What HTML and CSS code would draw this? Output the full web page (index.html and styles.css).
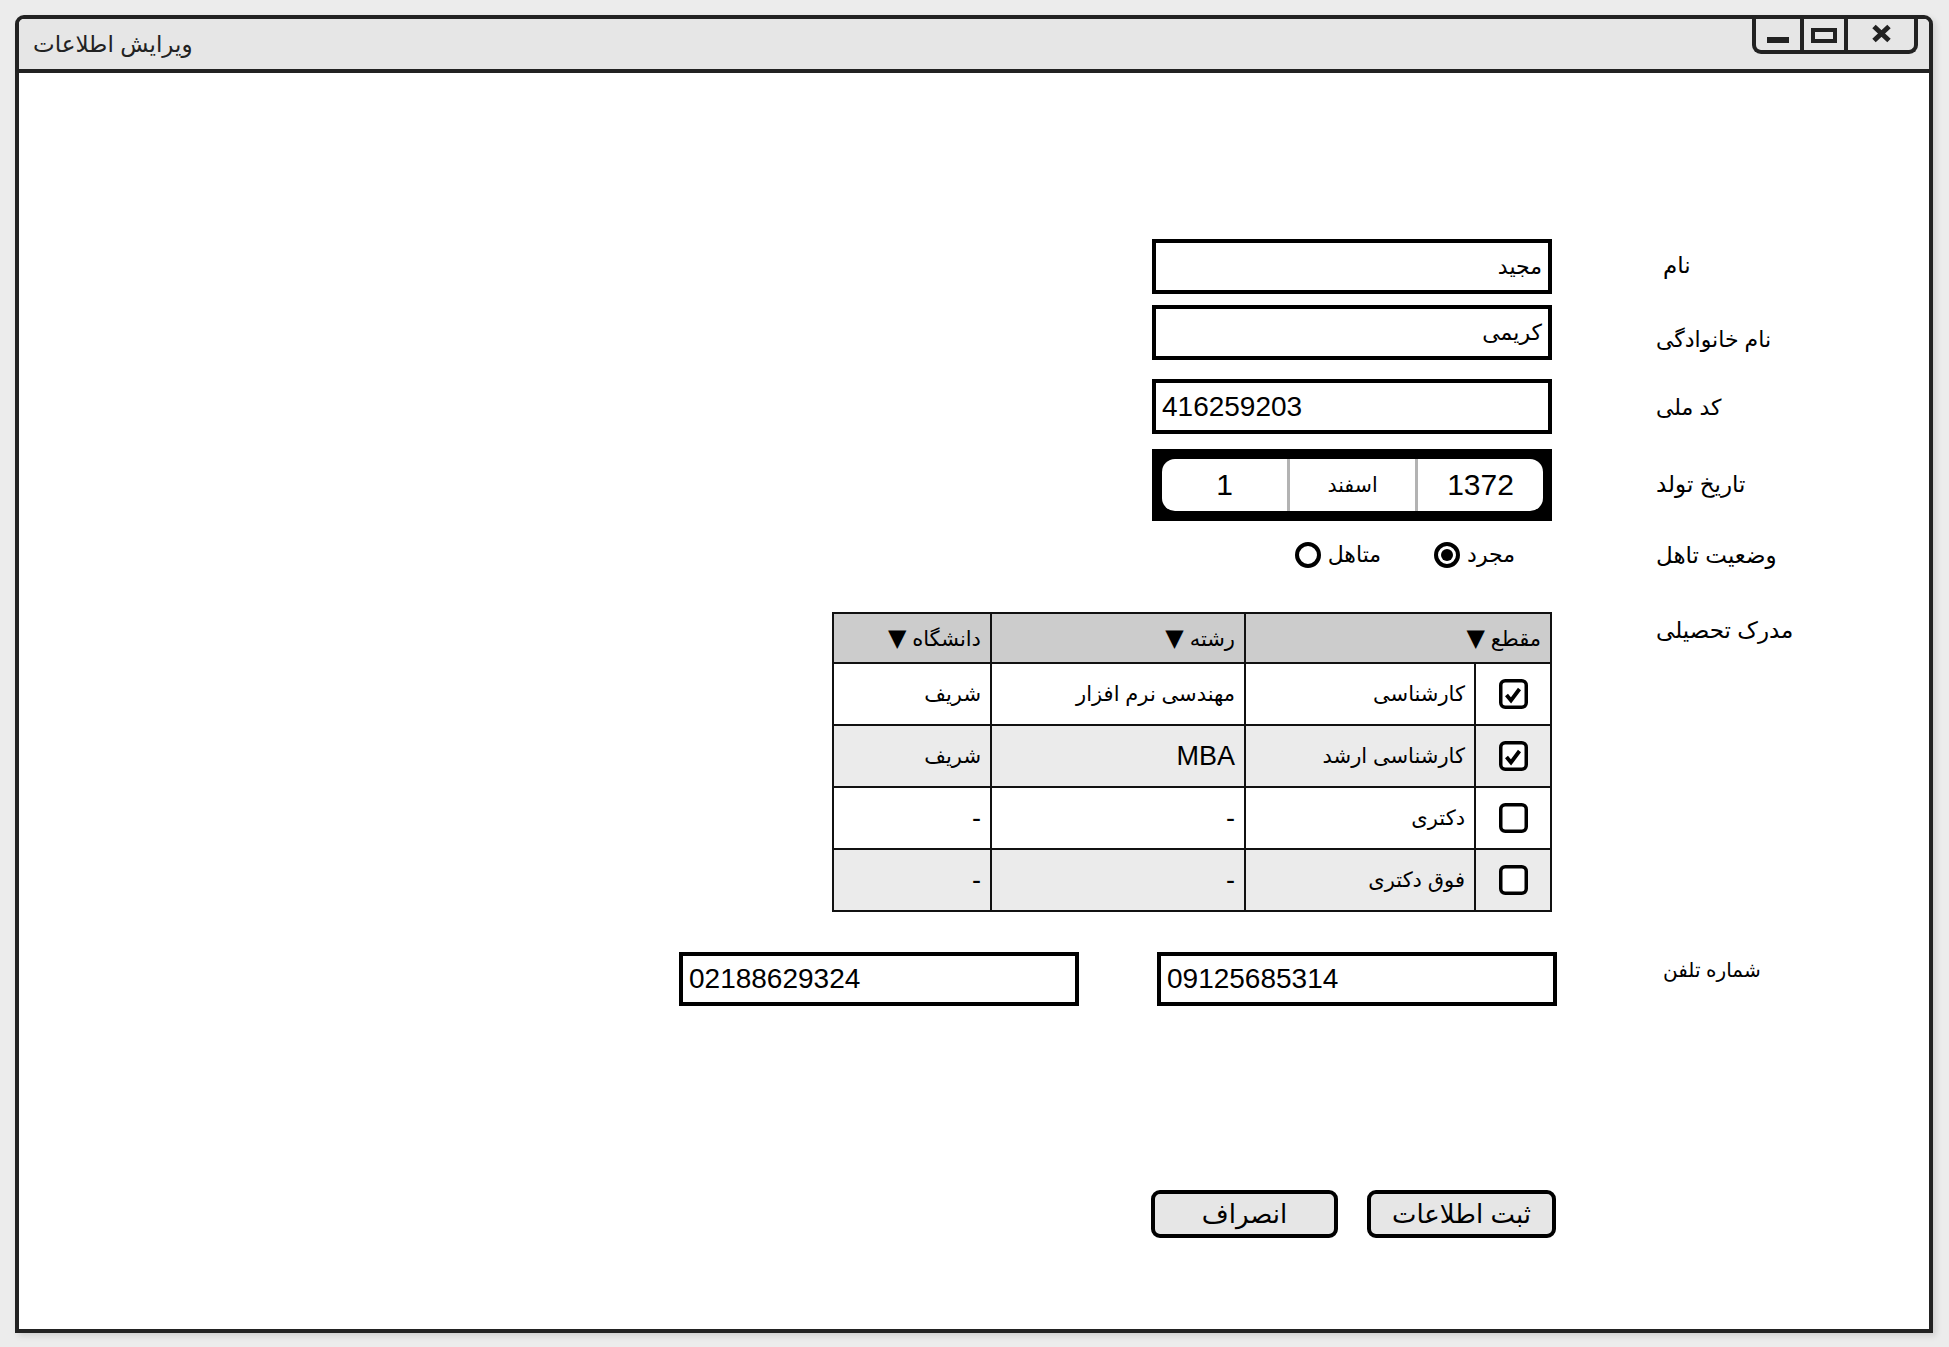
FILE: index.html
```html
<!DOCTYPE html>
<html lang="fa">
<head>
<meta charset="utf-8">
<title>ویرایش اطلاعات</title>
<link rel="stylesheet" href="styles.css">
</head>
<body>
<div class="window">
  <div class="titlebar">
    <span class="title" dir="rtl">ویرایش اطلاعات</span>
    <div class="controls">
      <span class="ctl ctl-min"><span class="min-bar"></span></span>
      <span class="ctl ctl-max"><span class="max-box"></span></span>
      <span class="ctl ctl-close">
        <svg width="21" height="19" viewBox="0 0 21 19"><path d="M3 2.5 L18 16.5 M18 2.5 L3 16.5" stroke="#222" stroke-width="5" fill="none"/></svg>
      </span>
    </div>
  </div>

  <div class="content">
    <div class="row row-name">
      <div class="main"><div class="field rtl" dir="rtl">مجید</div></div>
      <div class="label label-name" dir="rtl">نام</div>
    </div>

    <div class="row row-family">
      <div class="main"><div class="field rtl" dir="rtl">کریمی</div></div>
      <div class="label label-family" dir="rtl">نام خانوادگی</div>
    </div>

    <div class="row row-code">
      <div class="main"><div class="field">416259203</div></div>
      <div class="label label-code" dir="rtl">کد ملی</div>
    </div>

    <div class="row row-date">
      <div class="main">
        <div class="date">
          <div class="date-inner">
            <span class="seg">1</span>
            <span class="seg month" dir="rtl">اسفند</span>
            <span class="seg">1372</span>
          </div>
        </div>
      </div>
      <div class="label label-date" dir="rtl">تاریخ تولد</div>
    </div>

    <div class="row row-marital">
      <div class="main">
        <div class="radios">
          <span class="opt"><span class="radio"></span><span dir="rtl">متاهل</span></span>
          <span class="opt"><span class="radio"><span class="dot"></span></span><span dir="rtl">مجرد</span></span>
        </div>
      </div>
      <div class="label label-marital" dir="rtl">وضعیت تاهل</div>
    </div>

    <div class="row row-edu">
      <div class="main">
        <table class="grid" dir="rtl">
          <colgroup>
            <col class="c-check"><col class="c-level"><col class="c-field"><col class="c-uni">
          </colgroup>
          <thead>
            <tr>
              <th colspan="2">مقطع <span class="arrow">▼</span></th>
              <th>رشته <span class="arrow">▼</span></th>
              <th>دانشگاه <span class="arrow">▼</span></th>
            </tr>
          </thead>
          <tbody>
            <tr>
              <td class="chk"><svg class="box" width="29" height="30" viewBox="0 0 29 30"><rect x="1.75" y="1.75" width="25.5" height="26.5" rx="4.5" fill="#fff" stroke="#000" stroke-width="3.5"/><path d="M7.5 16 L12 21.5 L20.5 10" fill="none" stroke="#000" stroke-width="3.8"/></svg></td>
              <td>کارشناسی</td><td>مهندسی نرم افزار</td><td>شریف</td>
            </tr>
            <tr>
              <td class="chk"><svg class="box" width="29" height="30" viewBox="0 0 29 30"><rect x="1.75" y="1.75" width="25.5" height="26.5" rx="4.5" fill="#fff" stroke="#000" stroke-width="3.5"/><path d="M7.5 16 L12 21.5 L20.5 10" fill="none" stroke="#000" stroke-width="3.8"/></svg></td>
              <td>کارشناسی ارشد</td><td class="lat">MBA</td><td>شریف</td>
            </tr>
            <tr>
              <td class="chk"><svg class="box" width="29" height="30" viewBox="0 0 29 30"><rect x="1.75" y="1.75" width="25.5" height="26.5" rx="4.5" fill="#fff" stroke="#000" stroke-width="3.5"/></svg></td>
              <td>دکتری</td><td class="lat">-</td><td class="lat">-</td>
            </tr>
            <tr>
              <td class="chk"><svg class="box" width="29" height="30" viewBox="0 0 29 30"><rect x="1.75" y="1.75" width="25.5" height="26.5" rx="4.5" fill="#fff" stroke="#000" stroke-width="3.5"/></svg></td>
              <td>فوق دکتری</td><td class="lat">-</td><td class="lat">-</td>
            </tr>
          </tbody>
        </table>
      </div>
      <div class="label label-edu" dir="rtl">مدرک تحصیلی</div>
    </div>

    <div class="row row-phone">
      <div class="main">
        <div class="phones">
          <div class="field phone">02188629324</div>
          <div class="field phone">09125685314</div>
        </div>
      </div>
      <div class="label label-phone" dir="rtl">شماره تلفن</div>
    </div>

    <div class="row row-actions">
      <div class="main">
        <div class="actions">
          <span class="btn" dir="rtl">انصراف</span>
          <span class="btn btn-primary" dir="rtl">ثبت اطلاعات</span>
        </div>
      </div>
      <div></div>
    </div>
  </div>
</div>
</body>
</html>
```

FILE: styles.css
```css
* { box-sizing: border-box; }
html, body { margin: 0; }
body {
  background: #ececec;
  padding: 15px;
  font-family: "Liberation Sans", "DejaVu Sans", sans-serif;
  color: #000;
  width: 1949px;
  height: 1347px;
  overflow: hidden;
}
.window {
  width: 1918px;
  height: 1318px;
  border: 4px solid #222;
  border-radius: 9px 9px 0 0;
  background: #fff;
  box-shadow: 3px 3px 6px rgba(0, 0, 0, 0.12);
  display: flex;
  flex-direction: column;
}
.titlebar {
  height: 54px;
  flex: none;
  background: #e6e6e6;
  border-bottom: 4px solid #222;
  border-radius: 5px 5px 0 0;
  display: flex;
  align-items: flex-start;
  justify-content: space-between;
  padding-left: 14px;
  padding-right: 11px;
}
.title {
  align-self: center;
  font-size: 23px;
  color: #222;
}
.controls {
  display: flex;
  height: 35px;
  border: 4px solid #222;
  border-top: 0;
  border-radius: 0 0 9px 9px;
}
.ctl {
  display: flex;
  justify-content: center;
  align-items: flex-end;
  padding-bottom: 7px;
}
.ctl-min { width: 44px; }
.ctl-max { width: 44px; border-left: 4px solid #222; }
.ctl-close { width: 70px; border-left: 4px solid #222; }
.min-bar { width: 22px; height: 6px; background: #222; }
.max-box { width: 26px; height: 15px; border: 4px solid #222; }

.content {
  flex: 1;
  padding-top: 166px;
}
.row {
  display: grid;
  grid-template-columns: 1fr 273px;
  column-gap: 104px;
  align-items: start;
}
.main {
  display: flex;
  justify-content: flex-end;
}
.label {
  font-size: 23px;
  line-height: 30px;
  text-align: left;
  white-space: nowrap;
}
.row-name { margin-bottom: 11px; }
.row-family { margin-bottom: 19px; }
.row-code { margin-bottom: 15px; }
.row-date { margin-bottom: 16px; }
.row-marital { margin-bottom: 39px; }
.row-edu { margin-bottom: 40px; }
.row-phone { margin-bottom: 184px; }

.label-name { margin-top: 11px; padding-left: 7px; }
.label-family { margin-top: 20px; font-size: 22px; }
.label-code { margin-top: 14px; font-size: 22px; }
.label-date { margin-top: 20px; }
.label-marital { margin-top: 3px; }
.label-edu { margin-top: 3px; }
.label-phone { margin-top: 3px; padding-left: 7px; font-size: 20px; }

.field {
  width: 400px;
  height: 55px;
  border: 4px solid #000;
  display: flex;
  align-items: center;
  padding: 0 6px;
  font-size: 28px;
  background: #fff;
}
.field.rtl {
  font-size: 22px;
}

.date {
  width: 400px;
  height: 72px;
  background: #000;
  padding: 10px 9px 10px 10px;
}
.date-inner {
  display: flex;
  height: 100%;
  background: #fff;
  border-radius: 13px;
}
.seg {
  flex: 1;
  display: flex;
  align-items: center;
  justify-content: center;
  font-size: 30px;
}
.seg + .seg { border-left: 3px solid #b3b3b3; }
.seg.month { font-size: 20.5px; }

.radios {
  display: flex;
  align-items: center;
  gap: 53px;
  margin-right: 37px;
  height: 36px;
  font-size: 22px;
}
.opt {
  display: flex;
  align-items: center;
  gap: 7px;
}
.radio {
  width: 26px;
  height: 26px;
  border: 4px solid #000;
  border-radius: 50%;
  display: flex;
  align-items: center;
  justify-content: center;
}
.dot {
  width: 12px;
  height: 12px;
  border-radius: 50%;
  background: #000;
}

.grid {
  border-collapse: collapse;
  table-layout: fixed;
  width: 718px;
  font-size: 21px;
}
.c-check { width: 76px; }
.c-level { width: 230px; }
.c-field { width: 254px; }
.c-uni { width: 158px; }
.grid th, .grid td {
  border: 2px solid #111;
  padding: 0 9px;
  text-align: right;
  font-weight: normal;
  vertical-align: middle;
}
.grid thead th {
  background: #ccc;
  height: 50px;
}
.arrow {
  font-family: "DejaVu Sans", sans-serif;
  font-size: 24px;
}
.grid tbody td {
  height: 62px;
}
.grid td.lat { font-size: 27px; }
.grid tbody tr:nth-child(even) td { background: #ebebeb; }
.grid td.chk {
  padding: 0;
}
.box { display: block; margin: 0 auto; }

.phones {
  display: flex;
  gap: 78px;
  margin-right: -5px;
}
.phone { height: 54px; }

.actions {
  display: flex;
  gap: 29px;
  margin-right: -4px;
}
.btn {
  width: 187px;
  height: 48px;
  border: 4px solid #000;
  border-radius: 9px;
  background: #e6e6e6;
  font-size: 26px;
  display: flex;
  align-items: center;
  justify-content: center;
}
.btn-primary { width: 189px; }
```
